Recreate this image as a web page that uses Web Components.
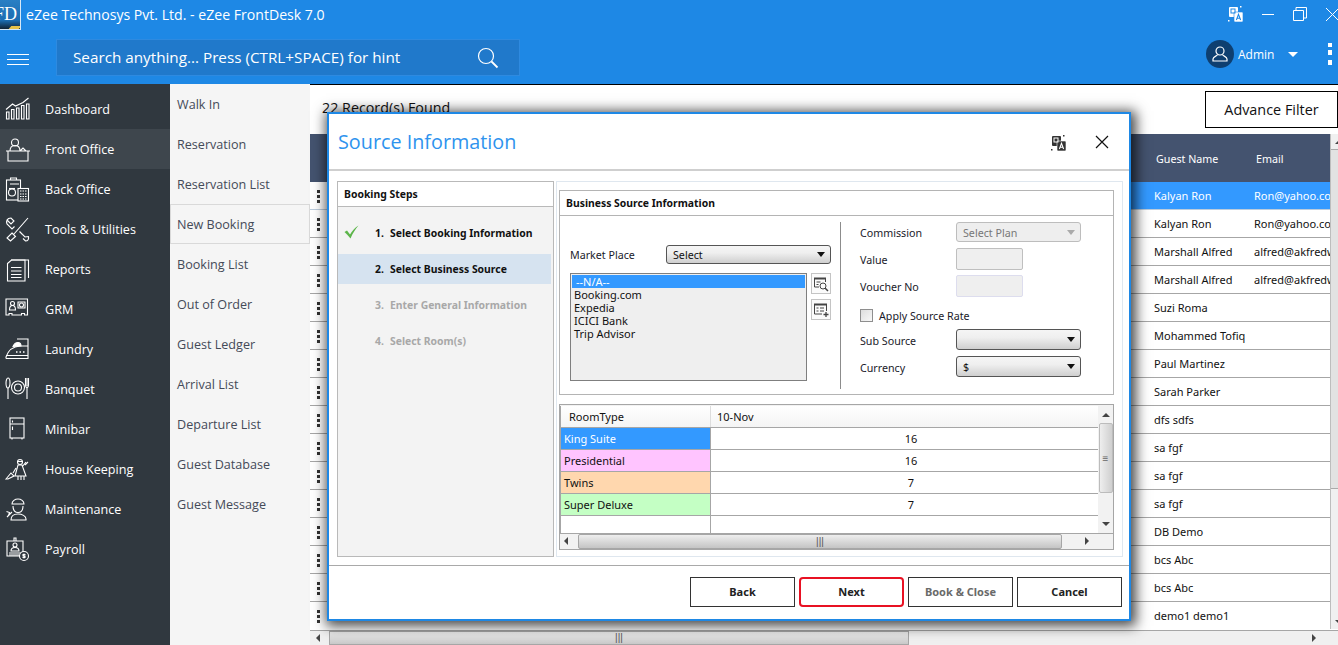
<!DOCTYPE html>
<html>
<head>
<meta charset="utf-8">
<title>eZee FrontDesk</title>
<style>
  html, body { margin: 0; height: 100%; overflow: hidden; background: #fff; }
  body { font-family: "Open Sans", "Noto Sans", sans-serif; }
</style>
</head>
<body>
<ez-app>
  <ez-titlebar slot="top"></ez-titlebar>
  <ez-searchbar slot="top"></ez-searchbar>
  <ez-sidebar slot="main"></ez-sidebar>
  <ez-submenu slot="main"></ez-submenu>
  <ez-records slot="main"></ez-records>
  <ez-dialog slot="over" heading="Source Information">
    <ez-steps slot="left"></ez-steps>
    <ez-source-form slot="right"></ez-source-form>
    <ez-room-grid slot="right"></ez-room-grid>
    <ez-button slot="actions">Back</ez-button>
    <ez-button slot="actions" kind="next">Next</ez-button>
    <ez-button slot="actions" kind="muted">Book &amp; Close</ez-button>
    <ez-button slot="actions">Cancel</ez-button>
  </ez-dialog>
</ez-app>

<script>
const UI_FONT = '"Open Sans", "Noto Sans", sans-serif';
const FORM_FONT = '"Noto Sans", "Open Sans", sans-serif';

function translateIcon(bg, fg) {
  return `<svg width="16" height="17" viewBox="0 0 16 17">
    <rect x="1" y="1" width="9" height="10" rx="1" fill="${bg}"/>
    <rect x="6" y="6" width="9" height="10" rx="1" fill="${bg}" stroke="${fg}" stroke-width=".6"/>
    <rect x="3" y="3" width="4" height="4" fill="none" stroke="${fg}" stroke-width="1"/>
    <path d="M8.4 14 10.5 8.4 12.6 14M9.2 12.3H11.8" fill="none" stroke="${fg}" stroke-width="1.1"/>
    <rect x="12" y="0" width="1.5" height="1.5" fill="${bg}"/><rect x="0" y="14" width="1.5" height="1.5" fill="${bg}"/>
  </svg>`;
}

const NAV_ICONS = {
  dashboard: `<path d="M1.5 15v7h2.5v-7zM6.5 12.5V22H9v-9.500zM11.500 11v11H14V11zM16.500 8.500V22H19V8.500zM21.500 7V22H24V7z"/><path d="M1 12.500 7.500 7l3 2L18 5.500 23.500 1"/>`,
  front: `<circle cx="10" cy="5.500" r="3.500"/><path d="M5 14c0-4 2-5.500 5-5.500s5 1.500 5 5.500M15 14l3-3 3 3M1 14h25M3 14.500V24h20v-9.500"/>`,
  back: `<rect x="1.500" y="3" width="14" height="20"/><path d="M5.500 3V1h6v2M5 7h9"/><circle cx="7" cy="15.500" r="3.500"/><path d="M4 11.500h6"/><rect x="13" y="11.500" width="10.500" height="12.500" fill="#30383f"/><path d="M15 14h6.500M15 17h6.500M15 19.500h6.500M15 22h6.500" stroke-dasharray="1.500 1"/>`,
  tools: `<path d="M23 1 9 17M7 16l3.500 3.500-5 4.500L2 21z"/><path d="M2.500 3.500 6 7l3-3-3-3C2 1 1 4 2 7l5 5 2.500-2.500M15 15l5 5 3.500-.5c.5 2.500-.5 4.500-3 4.500l-2.500-2.500M14.500 14.500l3 3"/>`,
  reports: `<path d="M6 3h17.500v18"/><path d="M2.500 6.500 6.500 3H20v21H2.500zM6 10.500h10.500M6 14h10.500M6 17.500h10.500M6 20.500h10.500"/>`,
  grm: `<path d="M1 2h21.500v16h-3v-1.500h-3V18H7v-1.500H4V18H1z"/><circle cx="7.500" cy="6.500" r="2"/><path d="M4.500 13c0-3 1-4.500 3-4.500s3 1.500 3 4.500zM13 5h7v6h-7z"/><circle cx="16.500" cy="8" r="2"/>`,
  laundry: `<path d="M1 21.500h22V2H12M1 21.500V20C3 14 8 9.500 15 9h8M1 18.500h22"/><path d="M8 9.500c1-2.500 3-4 5-4s3 1.500 3 3.500z" fill="#fff"/><path d="M11 15h1.500M14.500 15h1.500M18 15h1.500" stroke-width="1.500"/>`,
  banquet: `<ellipse cx="3" cy="6" rx="2" ry="5"/><path d="M3 11v11"/><circle cx="13" cy="10.500" r="6.500"/><circle cx="13" cy="10.500" r="3.500"/><path d="M20.500 1v7c0 2 1.500 3 1.500 3v11M23.500 1v7c0 2-1.500 3-1.500 3M22 1v8"/>`,
  minibar: `<rect x="5" y="1" width="14" height="20" /><path d="M5 7h14M7.500 3.500v2M7.500 9.500v3.500M7 21v1.500M17 21v1.500"/>`,
  house: `<circle cx="15" cy="5" r="2.500"/><path d="M12 4.500h6M13 8h4l4 11H10zM13 19v4M16 19v4M19 19v4M11 11l-3 5M21 5l-4 5M1 22l5-6 3 3-6 3zM20 8l3-3"/>`,
  maint: `<path d="M7 7c0-3 3-5 6-5s6 2 6 5zM7 7h12M8 9c0 4 2 6.500 5 6.500s5-2.500 5-6.500"/><path d="M6 23c0-4 3-6 7-6s8 2 8 5v1zM2 20l5-5M1.500 14.500l3 1-1 3"/>`,
  payroll: `<path d="M2 4h16v15H2zM9 1h2v3H9z"/><circle cx="10" cy="8" r="2"/><path d="M6 14c0-2 1.500-3.500 4-3.500s4 1.500 4 3.500zM4 16h12M4 18h10"/><circle cx="19" cy="19" r="4.500" fill="#30383f"/><path d="M20.500 17.500h-2.500v1.500h2v1.500h-2.500M19 16.500v5"/>`
};

class EzApp extends HTMLElement {
  connectedCallback() {
    this.attachShadow({ mode: 'open' });
    this.shadowRoot.innerHTML = `
      <style>
        :host { display: flex; flex-direction: column; position: relative; width: 1338px; height: 645px; overflow: hidden; font-family: ${UI_FONT}; }
        .top { display: block; flex: none; }
        .main { flex: 1; display: flex; min-height: 0; }
      </style>
      <div class="top"><slot name="top"></slot></div>
      <div class="main"><slot name="main"></slot></div>
      <slot name="over"></slot>
    `;
  }
}

class EzTitlebar extends HTMLElement {
  connectedCallback() {
    this.attachShadow({ mode: 'open' });
    this.shadowRoot.innerHTML = `
      <style>
        :host { display: flex; align-items: flex-start; position: relative; height: 30px; background: #1e88e5; color: #fff; }
        .logo { width: 20px; height: 29px; flex: none; background: linear-gradient(#2a7fc4, #1b6db2 70%, #123 100%); border: 1px solid #d6e8f7; border-left: 0; border-top: 0; overflow: hidden; box-sizing: content-box; position: relative; }
        .logo span { position: absolute; right: 3px; top: 4px; font: 18px/20px "Liberation Serif", serif; color: #fff; }
        .logo i { position: absolute; right: 0; bottom: 0; width: 10px; height: 3px; background: #e6c34a; transform: skewX(-40deg); }
        .name { margin-left: 5px; font-size: 14.1px; line-height: 30px; }
        .controls { margin-left: auto; display: flex; align-items: center; height: 30px; }
        .tr { margin-right: 17px; display: flex; margin-top: -2px; }
        svg { display: block; }
      </style>
      <div class="logo"><span>FD</span><i></i></div>
      <div class="name">eZee Technosys Pvt. Ltd. - eZee FrontDesk 7.0</div>
      <div class="controls">
        <div class="tr">${translateIcon('#fff', '#1e88e5')}</div>
        <svg width="14" height="14" style="margin-right:18px;margin-top:-2px" viewBox="0 0 14 14"><path d="M1 7.500H13" stroke="#fff"/></svg>
        <svg width="14" height="14" style="margin-right:18px;margin-top:-3px" viewBox="0 0 14 14" fill="none" stroke="#fff"><path d="M.5 3.500h10v10H.5zM3 3V.5h10.500V11H11"/></svg>
        <svg width="13" height="14" style="margin-top:-2px" viewBox="0 0 13 14" fill="none" stroke="#fff"><path d="M1 1 14 14M14 1 1 14"/></svg>
      </div>
    `;
  }
}

class EzSearchbar extends HTMLElement {
  connectedCallback() {
    this.attachShadow({ mode: 'open' });
    this.shadowRoot.innerHTML = `
      <style>
        :host { display: flex; align-items: flex-start; height: 54px; background: #1e88e5; color: #fff; position: relative; }
        .burger { width: 22px; height: 11px; margin: 24px 27px 0 7px; flex: none; border-top: 1px solid #fff; border-bottom: 1px solid #fff; position: relative; box-sizing: border-box; }
        .burger::after { content: ""; position: absolute; left: 0; right: 0; top: 4px; border-top: 1px solid #fff; }
        .box { width: 464px; height: 37px; margin-top: 9px; box-sizing: border-box; display: flex; align-items: center; padding: 0 20px 0 16px; background: #2079cb; border: 1px solid #2e8ae0; font-size: 15.25px; }
        .box span { flex: 1; margin-top: -2px; }
        .user { margin-left: auto; display: flex; align-items: center; height: 54px; padding-top: 0; margin-top: -3px; }
        .avatar { width: 28px; height: 28px; border-radius: 50%; background: #0e3f70; display: flex; align-items: center; justify-content: center; margin-right: 4px; }
        .admin { font-size: 12px; width: 50px; }
        .caret { width: 0; height: 0; border: 5px solid transparent; border-top: 5px solid #fff; border-bottom: 0; margin-right: 30px; }
        .dots { width: 4px; height: 22px; margin-right: 6px; background: linear-gradient(#fff 0 4px, transparent 4px 7px, #fff 7px 12px, transparent 12px 17px, #fff 17px 22px); }
      </style>
      <div class="burger"></div>
      <div class="box">
        <span>Search anything... Press (CTRL+SPACE) for hint</span>
        <svg width="22" height="22" viewBox="0 0 22 22" fill="none" stroke="#fff" stroke-width="1.200"><circle cx="9" cy="9" r="7.500"/><path d="m14.500 14.500 6 6" stroke-width="1.800"/></svg>
      </div>
      <div class="user">
        <div class="avatar"><svg width="18" height="18" viewBox="0 0 18 18" fill="none" stroke="#fff" stroke-width="1.200"><circle cx="9" cy="6" r="4"/><path d="M6.500 9.500c0 1.500-4.500 2-4.500 4.500v2h14v-2c0-2.500-4.500-3-4.500-4.500"/></svg></div>
        <span class="admin">Admin</span>
        <span class="caret"></span>
        <span class="dots"></span>
      </div>
    `;
  }
}

class EzSidebar extends HTMLElement {
  connectedCallback() {
    const items = [['dashboard', 'Dashboard'], ['front', 'Front Office', true], ['back', 'Back Office'], ['tools', 'Tools & Utilities'], ['reports', 'Reports'], ['grm', 'GRM'], ['laundry', 'Laundry'], ['banquet', 'Banquet'], ['minibar', 'Minibar'], ['house', 'House Keeping'], ['maint', 'Maintenance'], ['payroll', 'Payroll']];
    this.attachShadow({ mode: 'open' });
    this.shadowRoot.innerHTML = `
      <style>
        :host { display: block; width: 170px; flex: none; box-sizing: border-box; padding-top: 5px; background: #30383f; color: #fff; font-size: 12.6px; }
        .item { display: flex; align-items: center; height: 40px; padding-left: 5px; }
        .item.on { background: #3e464d; }
        svg { width: 25px; height: 25px; margin-right: 15px; flex: none; fill: none; stroke: #fff; stroke-width: 1.1; }
      </style>
      ${items.map(([icon, label, on]) => `<div class="item${on ? ' on' : ''}"><svg viewBox="0 0 25 25">${NAV_ICONS[icon]}</svg><span>${label.replace('&', '&amp;')}</span></div>`).join('')}
    `;
  }
}

class EzSubmenu extends HTMLElement {
  connectedCallback() {
    const items = ['Walk In', 'Reservation', 'Reservation List', 'New Booking', 'Booking List', 'Out of Order', 'Guest Ledger', 'Arrival List', 'Departure List', 'Guest Database', 'Guest Message'];
    this.attachShadow({ mode: 'open' });
    this.shadowRoot.innerHTML = `
      <style>
        :host { display: block; width: 140px; flex: none; background: #f5f5f5; color: #444a58; font-size: 12.6px; }
        div { height: 40px; line-height: 41px; padding-left: 7px; box-sizing: border-box; }
        .on { border: 1px solid #d9d9d9; padding-left: 6px; line-height: 39px; }
      </style>
      ${items.map(t => `<div class="${t === 'New Booking' ? 'on' : ''}">${t}</div>`).join('')}
    `;
  }
}

class EzRecords extends HTMLElement {
  connectedCallback() {
    const rows = [['Kalyan Ron', 'Ron@yahoo.com'], ['Kalyan Ron', 'Ron@yahoo.com'], ['Marshall Alfred', 'alfred@akfredwin'], ['Marshall Alfred', 'alfred@akfredwin'], ['Suzi Roma', ''], ['Mohammed Tofiq', ''], ['Paul Martinez', ''], ['Sarah Parker', ''], ['dfs sdfs', ''], ['sa fgf', ''], ['sa fgf', ''], ['sa fgf', ''], ['DB Demo', ''], ['bcs Abc', ''], ['bcs Abc', ''], ['demo1 demo1', '']];
    this.attachShadow({ mode: 'open' });
    this.shadowRoot.innerHTML = `
      <style>
        :host { display: flex; flex-direction: column; flex: 1; min-width: 0; border-top: 1px solid #000; font-family: ${FORM_FONT}; }
        .top { flex: none; height: 49px; box-sizing: border-box; padding-top: 6px; display: flex; }
        .count { margin: 7px 0 0 12px; font: 14.3px/20px ${UI_FONT}; color: #111; }
        .filter { margin-left: auto; width: 133px; height: 37px; box-sizing: border-box; border: 1px solid #000; font: 14.4px/35px ${UI_FONT}; text-align: center; color: #111; }
        .body { flex: 1; display: flex; min-height: 0; }
        .table { flex: 1; min-width: 0; overflow: hidden; }
        .head, .row { display: grid; grid-template-columns: 18px 826px 100px 76px; overflow: hidden; white-space: nowrap; }
        .head { height: 48px; background: #44536f; color: #fff; font-size: 10.7px; line-height: 50px; }
        .head span:nth-child(3), .head span:nth-child(4) { padding-left: 2px; }
        .row { height: 28px; box-sizing: border-box; border-bottom: 1px solid #a6a6a6; font-size: 11px; line-height: 28px; color: #111; }
        .row span { overflow: hidden; }
        .row.sel { background: linear-gradient(90deg, #fff 0 18px, #3399ff 18px); color: #fff; border-bottom-color: #bcd; }
        .kebab { width: 3px; height: 13px; margin: 8px 0 0 7px; background: repeating-linear-gradient(#333 0 3px, transparent 3px 5px); }
        .vbar { width: 8px; flex: none; background: #f0f0f0; border-left: 1px solid #bdbdbd; position: relative; box-sizing: border-box; display: flex; flex-direction: column; align-items: flex-end; }
        .vbar i { display: block; width: 100%; margin-top: 15px; height: 338px; border-top: 1px solid #aaa; border-bottom: 1px solid #aaa; background: #e2e2e2; }
        .vbar b { width: 0; height: 0; border: 3px solid transparent; margin-right: -3px; }
        .vbar b.u { border-bottom: 3px solid #444; border-top: 0; position: absolute; top: 7px; right: 0; }
        .vbar b.d { border-top: 3px solid #444; border-bottom: 0; margin-top: auto; margin-bottom: 6px; }
        .hbar { height: 15px; flex: none; box-sizing: border-box; margin-top: 1px; display: flex; align-items: stretch; background: #f0f0f0; border-top: 1px solid #a6a6a6; }
        .hbar .a { width: 19px; position: relative; }
        .a::after { content: ""; position: absolute; left: 6px; top: 3px; border: 4px solid transparent; border-right: 4px solid #444; border-left: 0; }
        .hbar .thumb { width: 580px; background: linear-gradient(#eee, #c9c9c9); border: 1px solid #a6a6a6; box-sizing: border-box; text-align: center; font: 10px/12px "Liberation Sans", sans-serif; color: #555; }
        .r { margin-left: auto; width: 20px; position: relative; }
        .r::after { content: ""; position: absolute; left: 2px; top: 3px; border: 4px solid transparent; border-left: 4px solid #444; border-right: 0; }
        .corner { width: 8px; }
      </style>
      <div class="top">
        <div class="count">22 Record(s) Found</div>
        <div class="filter">Advance Filter</div>
      </div>
      <div class="body">
        <div class="table">
          <div class="head"><span></span><span></span><span>Guest Name</span><span>Email</span></div>
          ${rows.map(([n, e], i) => `<div class="row${i === 0 ? ' sel' : ''}"><span class="kebab"></span><span></span><span>${n}</span><span>${e}</span></div>`).join('')}
        </div>
        <div class="vbar"><b class="u"></b><i></i><b class="d"></b></div>
      </div>
      <div class="hbar"><span class="a"></span><span class="thumb">|||</span><span class="r"></span><span class="corner"></span></div>
    `;
  }
}

class EzDialog extends HTMLElement {
  connectedCallback() {
    this.attachShadow({ mode: 'open' });
    this.shadowRoot.innerHTML = `
      <style>
        :host { display: flex; flex-direction: column; position: absolute; left: 327px; top: 112px; width: 804px; height: 509px; box-sizing: border-box; background: #fff; border: 2px solid #1e88e5; box-shadow: 2px 2px 12px 3px rgba(0,0,0,.72); font-family: ${FORM_FONT}; }
        header { flex: none; height: 57px; box-sizing: border-box; display: flex; align-items: center; padding: 0 20px 0 9px; border-bottom: 2px solid #cfcfcf; }
        h1 { margin: 0; flex: 1; font: 400 19.8px/28px ${UI_FONT}; color: #2e93ee; }
        header svg { display: block; }
        .tr { margin: 4px 28px 0 0; }
        .body { flex: none; height: 376px; margin-top: 10px; display: flex; gap: 2px; padding-left: 8px; }
        .right { width: 567px; box-sizing: border-box; border: 1px solid #dfe7ef; padding: 8px 8px 0 2px; display: flex; flex-direction: column; gap: 9px; }
        .left { display: flex; }
        footer { flex: none; margin-top: 8px; border-top: 1px solid #a9a9a9; padding: 11px 7px 0 0; display: flex; justify-content: flex-end; gap: 4px; }
      </style>
      <header>
        <h1>${this.getAttribute('heading')}</h1>
        <span class="tr">${translateIcon('#333', '#fff')}</span>
        <svg width="14" height="14" viewBox="0 0 14 14" fill="none" stroke="#111" stroke-width="1.200"><path d="M1 1 13 13M13 1 1 13"/></svg>
      </header>
      <div class="body">
        <div class="left"><slot name="left"></slot></div>
        <div class="right"><slot name="right"></slot></div>
      </div>
      <footer><slot name="actions"></slot></footer>
    `;
  }
}

class EzSteps extends HTMLElement {
  connectedCallback() {
    const steps = [['1.', 'Select Booking Information', 'done'], ['2.', 'Select Business Source', 'cur'], ['3.', 'Enter General Information', 'off'], ['4.', 'Select Room(s)', 'off']];
    this.attachShadow({ mode: 'open' });
    this.shadowRoot.innerHTML = `
      <style>
        :host { display: block; width: 217px; height: 376px; box-sizing: border-box; border: 1px solid #b9b9b9; background: #f3f3f3; font-size: 10.4px; font-weight: 700; color: #111; }
        .title { height: 25px; box-sizing: border-box; background: #fff; border-bottom: 1px solid #b9b9b9; padding-left: 6px; line-height: 24px; }
        .list { padding: 11px 2px 0 0; }
        .step { height: 30px; line-height: 30px; margin-bottom: 6px; display: flex; position: relative; padding-left: 37px; }
        .step b { width: 15px; font-weight: 700; }
        .cur { background: #d6e3f0; }
        .off { color: #a8a8a8; }
        svg { position: absolute; left: 6px; top: 7px; }
      </style>
      <div class="title">Booking Steps</div>
      <div class="list">
        ${steps.map(([n, t, s]) => `<div class="step ${s}">${s === 'done' ? '<svg width="15" height="14" viewBox="0 0 15 14"><path d="M.5 7 3 5.500 6 9.500C8 6 11 2.500 14.500.5 11.500 4 8.500 8.500 6.500 13.500 4.500 11 2.500 9 .5 7z" fill="#5cb54a"/></svg>' : ''}<b>${n}</b><span>${t}</span></div>`).join('')}
      </div>
    `;
  }
}

class EzSelect extends HTMLElement {
  connectedCallback() {
    const off = this.hasAttribute('disabled');
    this.attachShadow({ mode: 'open' });
    this.shadowRoot.innerHTML = `
      <style>
        :host { display: flex; align-items: center; box-sizing: border-box; border: 1px solid ${off ? '#bdbdbd' : '#555'}; border-radius: 3px; padding: 0 5px 0 6px; background: ${off ? '#eee' : 'linear-gradient(#f5f5f5, #efefef 40%, #cfcfcf)'}; font-size: 10.7px; color: ${off ? '#777' : '#111'}; }
        span { flex: 1; padding-top: 1px; }
        i { width: 0; height: 0; border: 4px solid transparent; border-top: 5px solid ${off ? '#aaa' : '#111'}; border-bottom: 0; }
      </style>
      <span><slot></slot></span><i></i>
    `;
  }
}

class EzSourceForm extends HTMLElement {
  connectedCallback() {
    this.attachShadow({ mode: 'open' });
    this.shadowRoot.innerHTML = `
      <style>
        :host { display: block; height: 205px; flex: none; box-sizing: border-box; border: 1px solid #b4b4b4; font-size: 10.7px; color: #1a1a2a; }
        .title { height: 25px; box-sizing: border-box; border-bottom: 1px solid #b4b4b4; padding-left: 6px; line-height: 24px; font-size: 10.4px; font-weight: 700; color: #111; }
        .cols { display: flex; }
        .left { width: 261px; margin-left: 10px; padding-top: 29px; }
        .market { display: flex; align-items: center; height: 19px; }
        .market label { width: 96px; }
        .market ez-select { width: 165px; height: 19px; }
        .pick { display: flex; margin-top: 9px; gap: 4px; }
        .list { width: 237px; height: 108px; box-sizing: border-box; border: 1px solid #7f7f7f; background: #efefef; padding: 1px; font-size: 11px; line-height: 13px; color: #111; }
        .list div { padding-left: 2px; height: 13px; }
        .list .sel { background: #3399ff; color: #fff; padding-left: 4px; margin-bottom: 0; }
        .tools { display: flex; flex-direction: column; gap: 5px; }
        .tools span { width: 20px; height: 21px; box-sizing: border-box; border: 1px solid #c4c4c4; display: flex; align-items: center; justify-content: center; background: #fbfbfb; }
        .right { margin-left: 9px; margin-top: 6px; width: 241px; height: 167px; box-sizing: border-box; border-left: 1px solid #8c8c8c; padding: 0 0 0 19px; }
        .r { display: flex; align-items: center; }
        .r label { width: 96px; flex: none; padding-top: 2px; }
        .r ez-select { width: 125px; height: 100%; }
        .input { width: 67px; height: 22px; box-sizing: border-box; border: 1px solid #bfbfbf; border-radius: 2px; background: #efefef; }
        .input.light { border-color: #dde; }
        .check { width: 13px; height: 13px; box-sizing: border-box; border: 1px solid #8e8e8e; background: linear-gradient(135deg, #ddd, #f8f8f8); margin-right: 6px; }
      </style>
      <div class="title">Business Source Information</div>
      <div class="cols">
        <div class="left">
          <div class="market"><label>Market Place</label><ez-select>Select</ez-select></div>
          <div class="pick">
            <div class="list"><div class="sel">--N/A--</div><div>Booking.com</div><div>Expedia</div><div>ICICI Bank</div><div>Trip Advisor</div></div>
            <div class="tools">
              <span><svg width="16" height="16" viewBox="0 0 16 16" fill="none" stroke="#444"><path d="M1.500 11V2.500h11V6M1.500 11H6" /><path d="M1 2.500h12" stroke-width="2"/><path d="M3.500 6h4M3.500 8.500h2"/><circle cx="10" cy="10" r="3"/><path d="m12 12 3 3" stroke-width="1.500"/></svg></span>
              <span><svg width="16" height="16" viewBox="0 0 16 16" fill="none" stroke="#444"><path d="M1.500 12V2.500h12V9M1.500 12H9"/><path d="M1 2.500h13" stroke-width="2"/><path d="M3.500 6h2M7 6h4M3.500 9h2M7 9h4"/><path d="M13 10v5M10.500 12.500h5" stroke-width="1.300"/></svg></span>
            </div>
          </div>
        </div>
        <div class="right">
          <div class="r" style="height:20px"><label>Commission</label><ez-select disabled>Select Plan</ez-select></div>
          <div class="r" style="height:22px;margin-top:6px"><label>Value</label><div class="input"></div></div>
          <div class="r" style="height:22px;margin-top:5px"><label>Voucher No</label><div class="input light"></div></div>
          <div class="r" style="height:13px;margin-top:12px"><span class="check"></span><span>Apply Source Rate</span></div>
          <div class="r" style="height:21px;margin-top:7px"><label>Sub Source</label><ez-select></ez-select></div>
          <div class="r" style="height:21px;margin-top:6px"><label>Currency</label><ez-select>$</ez-select></div>
        </div>
      </div>
    `;
  }
}

class EzRoomGrid extends HTMLElement {
  connectedCallback() {
    const rows = [['King Suite', '16', '#3399ff', '#fff'], ['Presidential', '16', '#ffc4ff', '#111'], ['Twins', '7', '#ffd7ae', '#111'], ['Super Deluxe', '7', '#c4ffc4', '#111']];
    this.attachShadow({ mode: 'open' });
    this.shadowRoot.innerHTML = `
      <style>
        :host { display: block; height: 146px; flex: none; box-sizing: border-box; border: 1px solid #a6a6a6; padding-top: 1px; font-size: 11px; color: #111; background: #f2f2f2; }
        .wrap { display: grid; grid-template-columns: 538px 1fr; grid-template-rows: 127px 16px; height: 143px; }
        .cells { background: #fff; border-left: 1px solid #a6a6a6; overflow: hidden; }
        .row { display: grid; grid-template-columns: 150px 1fr; height: 22px; box-sizing: border-box; border-bottom: 1px solid #a6a6a6; line-height: 21px; }
        .row > span { box-sizing: border-box; border-right: 1px solid #a6a6a6; padding-left: 3px; }
        .row > span + span { border: 0; padding: 0 0 0 13px; text-align: center; }
        .head { background: linear-gradient(#fff, #f4f4f4); }
        .head > span { padding-left: 8px; border-right: 1px solid #ddd; }
        .row.head > span + span { text-align: left; padding-left: 6px; }
        .blank { height: 17px; border-bottom: 0; }
        .vbar { display: flex; flex-direction: column; align-items: center; position: relative; background: #f2f2f2; }
        .vbar .thumb { width: 14px; height: 70px; margin-top: 17px; box-sizing: border-box; border: 1px solid #bcbcbc; border-radius: 2px; background: linear-gradient(90deg, #eee, #cfcfcf); text-align: center; font: 10px/70px "Liberation Sans", sans-serif; color: #666; }
        .up, .down { width: 0; height: 0; border: 4px solid transparent; }
        .up { border-bottom: 4px solid #444; border-top: 0; margin-top: 7px; position: absolute; }
        .down { border-top: 4px solid #444; border-bottom: 0; margin-top: auto; margin-bottom: 7px; }
        .hbar { grid-column: 1 / 3; display: flex; height: 16px; box-sizing: border-box; border-top: 1px solid #a6a6a6; background: #f2f2f2; }
        .hbar .a { width: 18px; flex: none; position: relative; }
        .hbar .a::after { content: ""; position: absolute; left: 4px; top: 3px; border: 4px solid transparent; border-right: 4px solid #444; border-left: 0; }
        .hbar .thumb { width: 484px; box-sizing: border-box; border: 1px solid #a6a6a6; border-radius: 2px; background: linear-gradient(#eee, #c4c4c4); text-align: center; font: 10px/13px "Liberation Sans", sans-serif; color: #555; }
        .hbar .b { width: 22px; margin-left: 14px; position: relative; }
        .hbar .b::after { content: ""; position: absolute; left: 9px; top: 3px; border: 4px solid transparent; border-left: 4px solid #444; border-right: 0; }
      </style>
      <div class="wrap">
        <div class="cells">
          <div class="row head"><span>RoomType</span><span>10-Nov</span></div>
          ${rows.map(([n, v, bg, fg]) => `<div class="row"><span style="background:${bg};color:${fg}">${n}</span><span>${v}</span></div>`).join('')}
          <div class="row blank"><span></span><span></span></div>
        </div>
        <div class="vbar"><span class="up"></span><span class="thumb">≡</span><span class="down"></span></div>
        <div class="hbar"><span class="a"></span><span class="thumb">|||</span><span class="b"></span></div>
      </div>
    `;
  }
}

class EzButton extends HTMLElement {
  connectedCallback() {
    const kind = this.getAttribute('kind');
    this.attachShadow({ mode: 'open' });
    const next = kind === 'next';
    this.shadowRoot.innerHTML = `
      <style>
        :host { display: flex; align-items: center; justify-content: center; box-sizing: border-box; width: 105px; height: 30px; padding-bottom: 1px; background: #fff;
          border: ${next ? '2px solid #e81123' : '1px solid #333'}; border-radius: ${next ? 4 : 0}px; font-size: 11px; font-weight: 700; color: ${kind === 'muted' ? '#6a6a6a' : '#222'}; }
      </style>
      <slot></slot>
    `;
  }
}

customElements.define('ez-app', EzApp);
customElements.define('ez-titlebar', EzTitlebar);
customElements.define('ez-searchbar', EzSearchbar);
customElements.define('ez-sidebar', EzSidebar);
customElements.define('ez-submenu', EzSubmenu);
customElements.define('ez-records', EzRecords);
customElements.define('ez-dialog', EzDialog);
customElements.define('ez-steps', EzSteps);
customElements.define('ez-select', EzSelect);
customElements.define('ez-source-form', EzSourceForm);
customElements.define('ez-room-grid', EzRoomGrid);
customElements.define('ez-button', EzButton);
</script>
</body>
</html>
